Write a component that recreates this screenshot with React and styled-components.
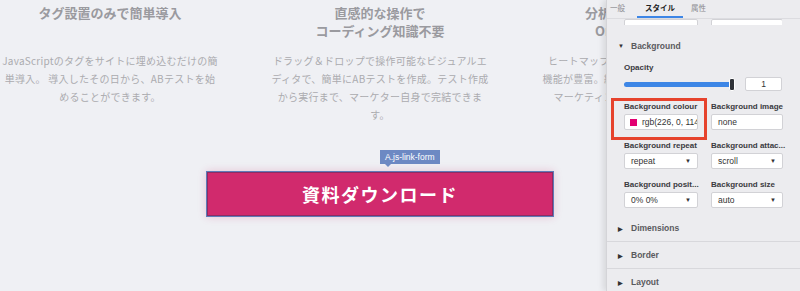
import React from "react"
import styled, { createGlobalStyle } from "styled-components"

const GlobalStyle = createGlobalStyle`
  html, body {
    margin: 0;
    padding: 0;
    background: #eff0f4;
    overflow: hidden;
  }
  * {
    box-sizing: border-box;
  }
`

const Page = styled.div`
  display: flex;
  width: 800px;
  height: 291px;
  overflow: hidden;
  background: #eff0f4;
  font-family: "Noto Sans CJK JP", "Noto Sans", sans-serif;
`

const Main = styled.main`
  flex: 0 0 606px;
  overflow: hidden;
`

const Content = styled.div`
  width: 760px;
  padding: 4px 2px 0;
  display: flex;
  flex-direction: column;
  align-items: center;
`

const Features = styled.div`
  display: grid;
  grid-template-columns: repeat(3, 216px);
  column-gap: 54px;
`

const Feature = styled.div`
  display: flex;
  flex-direction: column;
  align-items: center;
  text-align: center;
`

const FeatureTitle = styled.h3`
  margin: 0;
  min-height: 36px;
  font-size: 13px;
  line-height: 18px;
  font-weight: 700;
  color: #9a9a9f;
  white-space: nowrap;
`

const FeatureText = styled.p`
  margin: 12px 0 0;
  font-size: 10px;
  line-height: 18px;
  letter-spacing: 0.25px;
  color: #ababaf;
  white-space: nowrap;
`

const ButtonWrap = styled.div`
  position: relative;
  margin-top: 47px;
`

const DownloadButton = styled.a`
  display: flex;
  align-items: center;
  justify-content: center;
  width: 348px;
  height: 46px;
  background: #d12a6d;
  border: 1px solid #5f7cb9;
  box-shadow: inset 0 0 0 1px #8c2c63, 0 0 8px rgba(209, 42, 109, 0.22);
  color: #fff;
  font-size: 18px;
  font-weight: 700;
  letter-spacing: 1.5px;
  text-decoration: none;
`

const ElementTag = styled.span`
  position: absolute;
  left: 174px;
  bottom: calc(100% + 7px);
  height: 14px;
  padding: 0 5px;
  background: #6d89c3;
  color: #fff;
  font-family: "Liberation Sans", Arial, sans-serif;
  font-size: 8.5px;
  line-height: 14px;
  white-space: nowrap;

  &::after {
    content: "";
    position: absolute;
    left: 5px;
    top: 100%;
    border-left: 3px solid transparent;
    border-right: 3px solid transparent;
    border-top: 3px solid #6d89c3;
  }
`

const Panel = styled.aside`
  position: relative;
  z-index: 1;
  flex: 0 0 194px;
  background: #ececef;
  border-left: 1px solid #d4d4d8;
  box-shadow: -3px 0 6px rgba(0, 0, 0, 0.1);
  font-family: "Liberation Sans", Arial, sans-serif;
  color: #333;
  overflow: hidden;
`

const TabBar = styled.div`
  display: flex;
  height: 19px;
  padding-left: 2px;
  border-bottom: 1px solid #dcdce0;
`

const Tab = styled.div`
  position: relative;
  height: 18px;
  padding: ${p => (p.$first ? "0 12px 0 1px" : "0 8px")};
  font-family: "Noto Sans CJK JP", sans-serif;
  font-size: 7.5px;
  line-height: 15px;
  font-weight: ${p => (p.$active ? 700 : 400)};
  color: ${p => (p.$active ? "#222" : "#8a8a8e")};

  &::after {
    content: "";
    display: ${p => (p.$active ? "block" : "none")};
    position: absolute;
    left: 0;
    right: 0;
    bottom: 0;
    height: 2px;
    background: #3d86e6;
  }
`

const Body = styled.div`
  padding: 0 18px 0 17px;
`

const HiddenRow = styled.div`
  display: grid;
  grid-template-columns: 74px 72px;
  column-gap: 13px;
  height: 6px;
  align-items: end;
  overflow: hidden;
`

const Field = styled.div`
  display: flex;
  align-items: center;
  justify-content: ${p => (p.$start ? "flex-start" : "space-between")};
  height: 16px;
  padding: ${p => (p.$start ? "0 0 0 5px" : "0 6px")};
  background: #fff;
  border: 1px solid #d2d2d6;
  border-radius: 2px;
  font-size: 8.5px;
  color: #333;
  white-space: nowrap;
  overflow: hidden;
`

const SectionHead = styled.div`
  display: flex;
  align-items: center;
  gap: 7px;
  height: 12px;
  margin: 15px 0 0 -6px;
  font-size: 8.5px;
  font-weight: 700;
  color: #5a5a5e;
`

const Caret = styled.span`
  font-size: 6px;
  color: #333;
  width: 6px;
`

const Label = styled.div`
  font-size: 8px;
  line-height: 11px;
  font-weight: 700;
  color: #3a3a3e;
  white-space: nowrap;
`

const OpacityBlock = styled.div`
  margin-top: 10px;
`

const SliderRow = styled.div`
  display: flex;
  align-items: center;
  gap: 12px;
  margin-top: 4px;
`

const Track = styled.div`
  position: relative;
  flex: 0 0 109px;
  height: 5px;
  border-radius: 3px;
  background: #3d86e6;
`

const Thumb = styled.span`
  position: absolute;
  right: -2px;
  top: -4px;
  width: 6px;
  height: 13px;
  border-radius: 2px;
  background: #2f3238;
  border: 1px solid #fff;
`

const NumberField = styled(Field)`
  width: 38px;
  height: 14px;
  justify-content: center;
`

const Grid = styled.div`
  display: grid;
  grid-template-columns: 74px 72px;
  column-gap: 13px;
  row-gap: 10px;
  margin-top: 10px;
`

const Cell = styled.div`
  position: relative;
  display: flex;
  flex-direction: column;
  gap: 2px;

  &::after {
    content: "";
    display: ${p => (p.$highlight ? "block" : "none")};
    position: absolute;
    top: -3px;
    bottom: -10px;
    left: -13px;
    right: -9px;
    border: 3px solid #e6432d;
  }
`

const Swatch = styled.span`
  flex: 0 0 7px;
  height: 7px;
  margin-right: 5px;
  background: #e20072;
`

const SelectArrow = styled.span`
  font-size: 6px;
  color: #333;
`

const Sections = styled.div`
  margin-top: 7px;
`

const Collapsed = styled.div`
  display: flex;
  align-items: center;
  gap: 7px;
  height: 27px;
  padding-left: 11px;
  border-bottom: 1px solid #d8d8dc;
  font-size: 8.5px;
  font-weight: 700;
  color: #5a5a5e;
`

const features = [
  {
    title: ["タグ設置のみで簡単導入"],
    text: [
      "JavaScriptのタグをサイトに埋め込むだけの簡",
      "単導入。 導入したその日から、ABテストを始",
      "めることができます。",
    ],
  },
  {
    title: ["直感的な操作で", "コーディング知識不要"],
    text: [
      "ドラッグ＆ドロップで操作可能なビジュアルエ",
      "ディタで、簡単にABテストを作成。テスト作成",
      "から実行まで、マーケター自身で完結できま",
      "す。",
    ],
  },
  {
    title: ["分析ツールとの連携で", "One to Oneの改善"],
    text: [
      "ヒートマップやアクセス解析など、分析系の",
      "機能が豊富。結果を分析して次の施策を考え、",
      "マーケティングをもっと効率化できます。",
    ],
  },
]

function Lines({ lines }) {
  return lines.map((line, i) => (
    <React.Fragment key={i}>
      {i > 0 && <br />}
      {line}
    </React.Fragment>
  ))
}

function SelectField({ value }) {
  return (
    <Field>
      <span>{value}</span>
      <SelectArrow>▼</SelectArrow>
    </Field>
  )
}

export default function App() {
  return (
    <>
      <GlobalStyle />
      <Page>
        <Main>
          <Content>
            <Features>
              {features.map((f, i) => (
                <Feature key={i}>
                  <FeatureTitle>
                    <Lines lines={f.title} />
                  </FeatureTitle>
                  <FeatureText>
                    <Lines lines={f.text} />
                  </FeatureText>
                </Feature>
              ))}
            </Features>
            <ButtonWrap>
              <ElementTag>A.js-link-form</ElementTag>
              <DownloadButton href="#">資料ダウンロード</DownloadButton>
            </ButtonWrap>
          </Content>
        </Main>

        <Panel>
          <TabBar>
            <Tab $first>一般</Tab>
            <Tab $active>スタイル</Tab>
            <Tab>属性</Tab>
          </TabBar>
          <Body>
            <HiddenRow>
              <Field />
              <Field />
            </HiddenRow>
            <SectionHead>
              <Caret>▼</Caret>
              Background
            </SectionHead>
            <OpacityBlock>
              <Label>Opacity</Label>
              <SliderRow>
                <Track>
                  <Thumb />
                </Track>
                <NumberField>1</NumberField>
              </SliderRow>
            </OpacityBlock>
            <Grid>
              <Cell $highlight>
                <Label>Background colour</Label>
                <Field $start>
                  <Swatch />
                  rgb(226, 0, 114)
                </Field>
              </Cell>
              <Cell>
                <Label>Background image</Label>
                <Field>none</Field>
              </Cell>
              <Cell>
                <Label>Background repeat</Label>
                <SelectField value="repeat" />
              </Cell>
              <Cell>
                <Label>Background attac...</Label>
                <SelectField value="scroll" />
              </Cell>
              <Cell>
                <Label>Background posit...</Label>
                <SelectField value="0% 0%" />
              </Cell>
              <Cell>
                <Label>Background size</Label>
                <SelectField value="auto" />
              </Cell>
            </Grid>
          </Body>
          <Sections>
            <Collapsed>
              <Caret>▶</Caret>
              Dimensions
            </Collapsed>
            <Collapsed>
              <Caret>▶</Caret>
              Border
            </Collapsed>
            <Collapsed>
              <Caret>▶</Caret>
              Layout
            </Collapsed>
          </Sections>
        </Panel>
      </Page>
    </>
  )
}
